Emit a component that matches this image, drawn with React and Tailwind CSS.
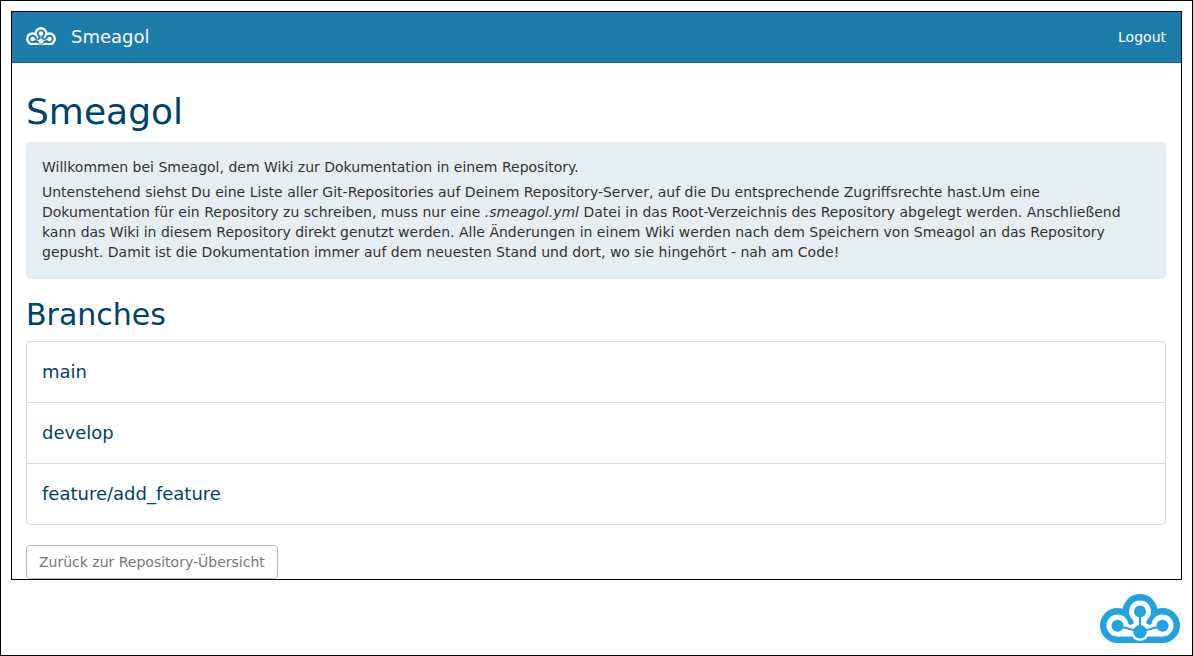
const branches = ["main", "develop", "feature/add_feature"];

function CloudLogo({ className, inner }) {
  return (
    <svg viewBox="0 0 80 49" className={className} aria-hidden="true">
      <g fill="currentColor">
        <circle cx="17.500" cy="31.500" r="17.500" />
        <circle cx="62.500" cy="31.500" r="17.500" />
        <circle cx="40" cy="17.500" r="17.500" />
        <path d="M17.500 49V28H62.500V49Z" />
      </g>
      <g className={inner}>
        <circle cx="17.500" cy="31.500" r="11" />
        <circle cx="62.500" cy="31.500" r="11" />
        <circle cx="40" cy="17.500" r="11" />
        <circle cx="40" cy="37.800" r="9" />
        <path d="M33.500 25H46.500V36H33.500Z" />
        <path d="M26 25Q27.500 30 30 31L35 29V42.500H17.500L22 30Z M54 25Q52.500 30 50 31L45 29V42.500H62.500L58 30Z" />
      </g>
      <g fill="currentColor">
        <circle cx="17.500" cy="31.800" r="6" />
        <circle cx="62.500" cy="31.800" r="6" />
        <circle cx="40" cy="17.500" r="6" />
        <circle cx="40" cy="37.800" r="6.700" />
      </g>
      <path d="M17.500 31.800L40 37.800L62.500 31.800M40 18V38" fill="none" stroke="currentColor" strokeWidth="2" />
    </svg>
  );
}

export default function App() {
  return (
    <div className="flex min-h-screen flex-col border border-black bg-white p-2.5 font-['DejaVu_Sans',sans-serif] text-sm leading-5 text-[#333333]">
      <div className="border border-black">
        <header className="flex h-[51px] items-center justify-between border-b border-[#15638a] bg-[#1c7dab] pr-[15px] pl-[14px] text-white">
          <a href="#" className="flex items-center gap-[15px] text-lg leading-5">
            <CloudLogo className="mb-0.5 w-[30px]" inner="fill-[#1c7dab]" />
            Smeagol
          </a>
          <a href="#">Logout</a>
        </header>
        <main className="pr-[15px] pl-[14px]">
          <h1 className="pt-[29px] pb-[10px] text-4xl leading-10 text-[#00426b]">Smeagol</h1>
          <section className="rounded bg-[#e7eef1] px-4 pt-[15px] pb-[17px]">
            <p className="mb-[5px]">Willkommen bei Smeagol, dem Wiki zur Dokumentation in einem Repository.</p>
            <p>
              Untenstehend siehst Du eine Liste aller Git-Repositories auf Deinem Repository-Server, auf die Du
              entsprechende Zugriffsrechte hast.Um eine Dokumentation für ein Repository zu schreiben, muss nur eine{" "}
              <i>.smeagol.yml</i> Datei in das Root-Verzeichnis des Repository abgelegt werden. Anschließend kann das
              Wiki in diesem Repository direkt genutzt werden. Alle Änderungen in einem Wiki werden nach dem Speichern
              von Smeagol an das Repository gepusht. Damit ist die Dokumentation immer auf dem neuesten Stand und dort,
              wo sie hingehört - nah am Code!
            </p>
          </section>
          <h2 className="pt-5 pb-[10px] text-3xl leading-8 text-[#00426b]">Branches</h2>
          <ul className="divide-y divide-[#dddddd] rounded border border-[#dddddd] text-lg leading-5 text-[#00426b]">
            {branches.map((branch) => (
              <li key={branch}>
                <a href="#" className="block px-[15px] py-5">
                  {branch}
                </a>
              </li>
            ))}
          </ul>
          <button
            type="button"
            className="mt-5 block rounded border border-[#bbbbbb] px-3 py-1.5 text-[#777777]"
          >
            Zurück zur Repository-Übersicht
          </button>
        </main>
      </div>
      <CloudLogo className="mt-[14px] mr-0.5 w-20 self-end text-[#22a3df]" inner="fill-white" />
    </div>
  );
}
